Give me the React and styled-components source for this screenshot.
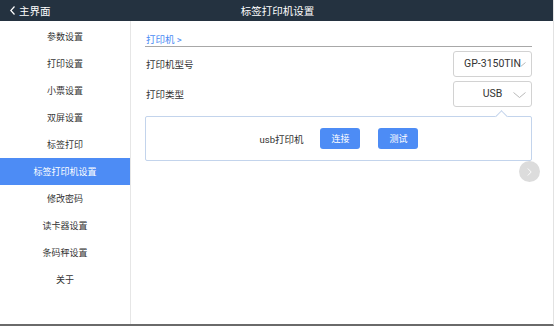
import styled, { createGlobalStyle } from "styled-components";

const GlobalStyle = createGlobalStyle`
  body {
    margin: 0;
    background: #ffffff;
    font-family: Roboto, "Noto Sans CJK SC", sans-serif;
  }
`;

const Screen = styled.div`
  width: 554px;
  height: 326px;
  display: flex;
  flex-direction: column;
  box-sizing: border-box;
  border-right: 1px solid #e2e2e2;
  border-bottom: 2px solid #6a6a6a;
  position: relative;
  overflow: hidden;
`;

const Header = styled.div`
  height: 21px;
  flex-shrink: 0;
  background: #243240;
  color: #ffffff;
  display: grid;
  grid-template-columns: 1fr auto 1fr;
  align-items: center;
  font-size: 10.5px;
  padding: 0 8px 0 10px;
`;

const BackLink = styled.div`
  display: flex;
  align-items: center;
  gap: 4px;

  svg {
    width: 5px;
    height: 9px;
  }
`;

const Title = styled.div`
  text-align: center;
`;

const Body = styled.div`
  flex: 1;
  display: flex;
`;

const Sidebar = styled.div`
  width: 130px;
  flex-shrink: 0;
  border-right: 1px solid #e6e6e6;
  padding-top: 2px;
`;

const MenuItem = styled.div`
  height: 27px;
  display: flex;
  align-items: center;
  justify-content: center;
  font-size: 9px;
  color: ${({ $active }) => ($active ? "#ffffff" : "#333333")};
  background: ${({ $active }) => ($active ? "#4d8cf5" : "transparent")};
`;

const Content = styled.div`
  flex: 1;
  padding: 13px 21px 0 14px;
  position: relative;
`;

const Breadcrumb = styled.div`
  color: #4a8af4;
  font-size: 9.5px;
  line-height: 12px;
  border-bottom: 1px solid #a8a8a8;
  padding-left: 1px;
`;

const Rows = styled.div`
  display: flex;
  flex-direction: column;
  gap: 4px;
  margin-top: 4px;
`;

const Row = styled.div`
  display: flex;
  align-items: center;
  justify-content: space-between;
`;

const Label = styled.div`
  font-size: 9.5px;
  color: #333333;
  padding-left: 1px;
`;

const SelectBox = styled.div`
  width: 79px;
  height: 26px;
  box-sizing: border-box;
  border: 1px solid #d2d2d2;
  border-radius: 3px;
  display: flex;
  align-items: center;
  justify-content: center;
  position: relative;
  font-size: 10.5px;
  color: #333333;

  svg {
    position: absolute;
    right: 5px;
    top: 10px;
    width: 13px;
    height: 6px;
  }
`;

const SelectText = styled.span`
  position: relative;
  z-index: 1;
  background: #ffffff;
  line-height: 12px;
`;

const Panel = styled.div`
  margin-top: 9px;
  height: 45px;
  box-sizing: border-box;
  border: 1px solid #c3d4ec;
  border-radius: 2px;
  display: flex;
  align-items: center;
  justify-content: center;
  gap: 17px;
  position: relative;
  padding-left: 1px;
`;

const Notch = styled.div`
  position: absolute;
  top: -5px;
  right: 25px;
  width: 8px;
  height: 8px;
  background: #ffffff;
  border-left: 1px solid #c3d4ec;
  border-top: 1px solid #c3d4ec;
  transform: rotate(45deg);
`;

const PanelLabel = styled.div`
  font-size: 9.5px;
  color: #333333;
`;

const ActionButton = styled.div`
  width: 40px;
  height: 21px;
  border-radius: 3px;
  background: #4d8cf5;
  color: #ffffff;
  font-size: 9px;
  display: flex;
  align-items: center;
  justify-content: center;
`;

const Buttons = styled.div`
  display: flex;
  gap: 18px;
`;

const FloatButton = styled.div`
  position: absolute;
  left: 388px;
  top: 140px;
  width: 21px;
  height: 21px;
  border-radius: 50%;
  background: #dcdcdc;
  display: flex;
  align-items: center;
  justify-content: center;

  svg {
    width: 5px;
    height: 8px;
  }
`;

const menu = [
  "参数设置",
  "打印设置",
  "小票设置",
  "双屏设置",
  "标签打印",
  "标签打印机设置",
  "修改密码",
  "读卡器设置",
  "条码秤设置",
  "关于",
];

function Chevron() {
  return (
    <svg viewBox="0 0 13 6">
      <path d="M0.5 0.5 L6.5 5.5 L12.5 0.5" fill="none" stroke="#b0b0b0" strokeWidth="0.9" />
    </svg>
  );
}

export default function App() {
  return (
    <>
      <GlobalStyle />
      <Screen>
        <Header>
          <BackLink>
            <svg viewBox="0 0 5 9">
              <path d="M4.5 0.5 L0.8 4.5 L4.5 8.5" fill="none" stroke="#ffffff" strokeWidth="1.2" />
            </svg>
            主界面
          </BackLink>
          <Title>标签打印机设置</Title>
          <div />
        </Header>
        <Body>
          <Sidebar>
            {menu.map((item) => (
              <MenuItem key={item} $active={item === "标签打印机设置"}>
                {item}
              </MenuItem>
            ))}
          </Sidebar>
          <Content>
            <Breadcrumb>打印机 &gt;</Breadcrumb>
            <Rows>
              <Row>
                <Label>打印机型号</Label>
                <SelectBox>
                  <SelectText>GP-3150TIN</SelectText>
                  <Chevron />
                </SelectBox>
              </Row>
              <Row>
                <Label>打印类型</Label>
                <SelectBox>
                  <SelectText>USB</SelectText>
                  <Chevron />
                </SelectBox>
              </Row>
            </Rows>
            <Panel>
              <Notch />
              <PanelLabel>usb打印机</PanelLabel>
              <Buttons>
                <ActionButton>连接</ActionButton>
                <ActionButton>测试</ActionButton>
              </Buttons>
            </Panel>
            <FloatButton>
              <svg viewBox="0 0 5 8">
                <path d="M0.8 0.5 L4.2 4 L0.8 7.5" fill="none" stroke="#ffffff" strokeWidth="0.9" />
              </svg>
            </FloatButton>
          </Content>
        </Body>
      </Screen>
    </>
  );
}
